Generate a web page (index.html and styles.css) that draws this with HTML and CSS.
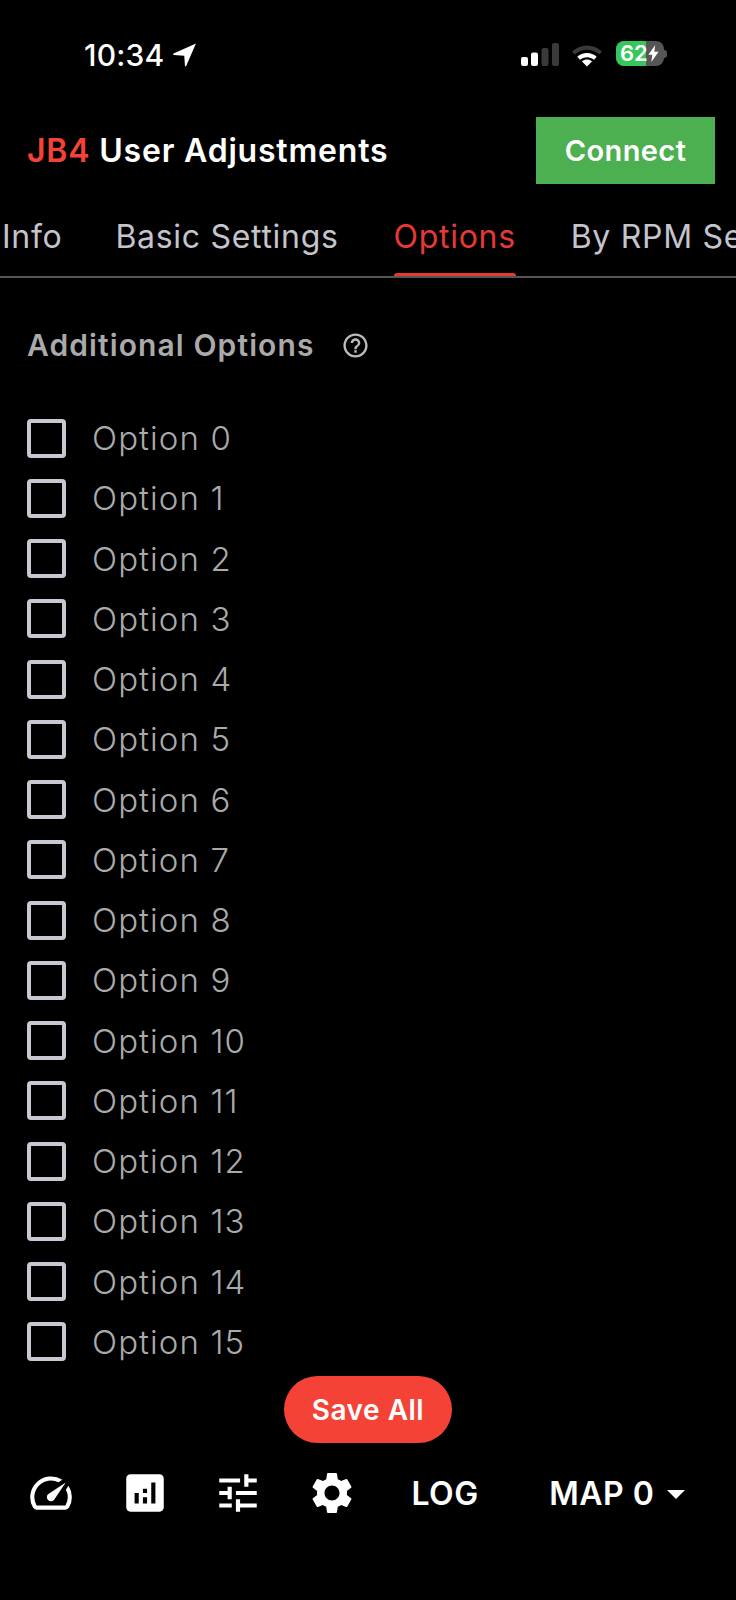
FILE: index.html
```html
<!DOCTYPE html>
<html>
  <head>
    <title>JB4 User Adjustments</title>
    <meta name="viewport" content="width=device-width, initial-scale=1.0" />
    <link rel="stylesheet" href="styles.css">
  </head>
  <body>
    <div class="status-bar">
      <div class="status-left">
        <span class="clock">10:34</span>
        <svg class="location" viewBox="0 0 24 24"><path d="M23 1.5 13.6 23c-.3.7-1.2.5-1.2-.2l-.6-9.7-10-.7c-.8 0-1-1-.3-1.3z" /></svg>
      </div>
      <div class="status-right">
        <svg class="signal" viewBox="0 0 38 24">
          <rect x="0" y="14" width="7" height="9" rx="2" fill="#fff" />
          <rect x="10" y="9.500" width="7" height="13.500" rx="2" fill="#fff" />
          <rect x="20.500" y="5" width="7" height="18" rx="2" fill="#3a3a3a" />
          <rect x="31" y="0" width="7" height="23" rx="2" fill="#3a3a3a" />
        </svg>
        <svg class="wifi" viewBox="0 0 32 24">
          <path d="M1 8.500C9.500.5 22.500.5 31 8.500l-2.700 3C21.500 5.200 10.500 5.200 3.700 11.500z" fill="#3a3a3a" />
          <path d="M6.300 13.800c5.500-5 14-5 19.400 0l-2.700 3c-4-3.500-10-3.500-14 0z" fill="#fff" />
          <path d="M11 18.400c3-2.500 7-2.500 10 0l-5 5.100z" fill="#fff" />
        </svg>
        <div class="battery">
          <div class="battery-body">
            <span class="battery-fill"></span>
            <span class="battery-level">62</span>
            <svg class="bolt" viewBox="0 0 12 20"><path d="M8 0 0 11.500h4.500L3.500 20 12 8H7z" /></svg>
          </div>
          <span class="battery-cap"></span>
        </div>
      </div>
    </div>

    <header class="app-header">
      <h1 class="title"><span class="brand">JB4</span> User Adjustments</h1>
      <button class="connect-button">Connect</button>
    </header>

    <nav class="tabs">
      <a class="tab">Info</a>
      <a class="tab">Basic Settings</a>
      <a class="tab tab-active">Options</a>
      <a class="tab">By RPM Settings</a>
    </nav>

    <main class="content">
      <div class="section-title">
        <h2>Additional Options</h2>
        <svg class="help" viewBox="0 0 24 24"><path d="M11 18h2v-2h-2v2zm1-16C6.480 2 2 6.480 2 12s4.480 10 10 10 10-4.480 10-10S17.520 2 12 2zm0 18c-4.410 0-8-3.590-8-8s3.590-8 8-8 8 3.590 8 8-3.590 8-8 8zm0-14c-2.210 0-4 1.790-4 4h2c0-1.100.9-2 2-2s2 .9 2 2c0 2-3 1.750-3 5h2c0-2.250 3-2.500 3-5 0-2.210-1.790-4-4-4z" /></svg>
      </div>
      <ul class="option-list">
        <li class="option"><span class="checkbox"></span>Option 0</li>
        <li class="option"><span class="checkbox"></span>Option 1</li>
        <li class="option"><span class="checkbox"></span>Option 2</li>
        <li class="option"><span class="checkbox"></span>Option 3</li>
        <li class="option"><span class="checkbox"></span>Option 4</li>
        <li class="option"><span class="checkbox"></span>Option 5</li>
        <li class="option"><span class="checkbox"></span>Option 6</li>
        <li class="option"><span class="checkbox"></span>Option 7</li>
        <li class="option"><span class="checkbox"></span>Option 8</li>
        <li class="option"><span class="checkbox"></span>Option 9</li>
        <li class="option"><span class="checkbox"></span>Option 10</li>
        <li class="option"><span class="checkbox"></span>Option 11</li>
        <li class="option"><span class="checkbox"></span>Option 12</li>
        <li class="option"><span class="checkbox"></span>Option 13</li>
        <li class="option"><span class="checkbox"></span>Option 14</li>
        <li class="option"><span class="checkbox"></span>Option 15</li>
      </ul>
      <button class="save-button">Save All</button>
    </main>

    <footer class="bottom-nav">
      <svg class="nav-icon" viewBox="0 0 24 24"><path d="M20.380 8.570l-1.230 1.850a8 8 0 0 1-.22 7.580H5.070A8 8 0 0 1 15.580 6.850l1.850-1.230A10 10 0 0 0 3.350 19a2 2 0 0 0 1.720 1h13.850a2 2 0 0 0 1.740-1 10 10 0 0 0-.27-10.440zm-9.790 6.840a2 2 0 0 0 2.830 0l5.660-8.490-8.490 5.660a2 2 0 0 0 0 2.830z" /></svg>
      <svg class="nav-icon" viewBox="0 0 24 24"><path d="M19 3H5c-1.100 0-2 .9-2 2v14c0 1.100.9 2 2 2h14c1.100 0 2-.9 2-2V5c0-1.100-.9-2-2-2zM9 17H7v-5h2v5zm4 0h-2v-3h2v3zm0-5h-2v-2h2v2zm4 5h-2V7h2v10z" /></svg>
      <svg class="nav-icon" viewBox="0 0 24 24"><path d="M3 17v2h6v-2H3zM3 5v2h10V5H3zm10 16v-2h8v-2h-8v-2h-2v6h2zM7 9v2H3v2h4v2h2V9H7zm14 4v-2H11v2h10zm-6-4h2V7h4V5h-4V3h-2v6z" /></svg>
      <svg class="nav-icon" viewBox="0 0 24 24"><path d="M19.140 12.940c.04-.3.06-.61.06-.94 0-.32-.02-.64-.07-.94l2.030-1.580c.18-.14.23-.41.12-.61l-1.920-3.320c-.12-.22-.37-.29-.59-.22l-2.390.96c-.5-.38-1.030-.7-1.620-.94l-.36-2.540c-.04-.24-.24-.41-.48-.41h-3.840c-.24 0-.43.17-.47.41l-.36 2.540c-.59.24-1.130.57-1.620.94l-2.390-.96c-.22-.08-.47 0-.59.22L2.740 8.870c-.12.21-.08.47.12.61l2.030 1.580c-.05.3-.09.63-.09.94s.02.64.07.94l-2.030 1.580c-.18.14-.23.41-.12.61l1.920 3.320c.12.22.37.29.59.22l2.390-.96c.5.38 1.030.7 1.620.94l.36 2.540c.05.24.24.41.48.41h3.840c.24 0 .44-.17.47-.41l.36-2.540c.59-.24 1.130-.56 1.620-.94l2.390.96c.22.08.47 0 .59-.22l1.920-3.320c.12-.22.07-.47-.12-.61l-2.010-1.580zM12 15.600c-1.980 0-3.600-1.620-3.600-3.600s1.620-3.600 3.600-3.600 3.600 1.620 3.600 3.600-1.620 3.600-3.600 3.600z" /></svg>
      <span class="nav-text nav-log">LOG</span>
      <span class="nav-text nav-map">MAP 0<span class="caret"></span></span>
    </footer>
  </body>
</html>
```

FILE: styles.css
```css
html,
body {
  margin: 0;
  padding: 0;
  background: #000;
  font-family: "Inter", sans-serif;
}

body {
  width: 736px;
  height: 1600px;
  overflow: hidden;
  display: flex;
  flex-direction: column;
  color: #fff;
}

/* status bar */
.status-bar {
  height: 117px;
  flex: 0 0 auto;
  display: flex;
  justify-content: space-between;
  box-sizing: border-box;
  padding: 37px 0 0 84px;
}

.status-left {
  display: flex;
  align-items: flex-start;
  gap: 8px;
}

.clock {
  font-size: 30px;
  font-weight: 500;
  line-height: 36px;
  letter-spacing: 0.2px;
}

.location {
  width: 25px;
  height: 25px;
  margin-top: 5px;
  fill: #fff;
}

.status-right {
  display: flex;
  align-items: flex-start;
  padding-right: 69px;
}

.signal {
  width: 38px;
  height: 24px;
  margin: 6px 12px 0 0;
}

.wifi {
  width: 32px;
  height: 24px;
  margin: 6px 13px 0 0;
}

.battery {
  display: flex;
  align-items: center;
  margin-top: 4px;
}

.battery-body {
  position: relative;
  width: 48px;
  height: 25px;
  border-radius: 8px;
  background: #555;
  overflow: hidden;
  display: flex;
  align-items: center;
}

.battery-fill {
  position: absolute;
  left: 0;
  top: 0;
  bottom: 0;
  width: 30px;
  background: #34c759;
}

.battery-level {
  position: relative;
  padding-left: 4px;
  font-size: 22px;
  font-weight: 600;
  line-height: 25px;
}

.bolt {
  position: relative;
  width: 11px;
  height: 17px;
  fill: #fff;
}

.battery-cap {
  width: 3px;
  height: 8px;
  border-radius: 0 3px 3px 0;
  background: #555;
}

/* header */
.app-header {
  flex: 0 0 auto;
  display: flex;
  align-items: center;
  justify-content: space-between;
  padding: 0 21px 0 27px;
}

.title {
  margin: 0;
  font-size: 32px;
  font-weight: 600;
  letter-spacing: 0.8px;
}

.brand {
  color: #f44336;
}

.connect-button {
  width: 179px;
  height: 67px;
  border: 0;
  background: #4caf50;
  color: #fff;
  font-family: inherit;
  font-size: 29px;
  font-weight: 600;
  letter-spacing: 0.4px;
}

/* tabs */
.tabs {
  flex: 0 0 auto;
  height: 94px;
  box-sizing: border-box;
  border-bottom: 2px solid #555;
  display: flex;
  overflow: hidden;
  white-space: nowrap;
  font-size: 32px;
  letter-spacing: 0.7px;
  color: #c4c4cc;
}

.tab {
  flex: 0 0 auto;
  position: relative;
  margin-left: 55px;
  padding-top: 33px;
}

.tab:first-child {
  margin-left: 2px;
  margin-right: -2px;
}

.tab-active {
  color: #e53935;
}

.tab-active::after {
  content: "";
  position: absolute;
  left: 0;
  right: 0;
  bottom: -2px;
  height: 5px;
  border-radius: 3px 3px 0 0;
  background: #e53935;
}

/* options */
.content {
  flex: 1 1 auto;
  padding: 0 27px;
  display: flex;
  flex-direction: column;
}

.section-title {
  display: flex;
  align-items: center;
  gap: 26px;
  height: 36px;
  margin-top: 49px;
  color: #aaa;
}

.section-title h2 {
  margin: 0;
  font-size: 30px;
  font-weight: 600;
  letter-spacing: 1.1px;
}

.help {
  width: 29px;
  height: 29px;
  fill: #bbb;
}

.option-list {
  list-style: none;
  margin: 45px 0 0;
  padding: 0;
}

.option {
  height: 60.250px;
  display: flex;
  align-items: center;
  gap: 26px;
  font-size: 33px;
  font-weight: 300;
  letter-spacing: 1.1px;
  color: #aaa;
}

.checkbox {
  width: 39px;
  height: 39px;
  box-sizing: border-box;
  border: 4px solid #c8c8d2;
  border-radius: 4px;
}

.save-button {
  align-self: center;
  width: 168px;
  height: 67px;
  margin-top: 4px;
  border: 0;
  border-radius: 34px;
  background: #f44336;
  color: #fff;
  font-family: inherit;
  font-size: 28px;
  font-weight: 600;
  letter-spacing: 0.5px;
}

/* bottom nav */
.bottom-nav {
  flex: 0 0 auto;
  height: 132px;
  display: flex;
  align-items: flex-start;
  padding: 0 0 0 26px;
  gap: 45.600px;
}

.nav-icon {
  width: 50px;
  height: 50px;
  fill: #fff;
  margin-right: -2px;
}

.nav-text {
  font-size: 32px;
  font-weight: 600;
  line-height: 52px;
  letter-spacing: 0.5px;
}

.nav-log {
  margin-left: 11px;
}

.nav-map {
  display: flex;
  align-items: center;
  margin-left: 25px;
}

.caret {
  margin-left: 13px;
  border-left: 9px solid transparent;
  border-right: 9px solid transparent;
  border-top: 9px solid #fff;
}
```
